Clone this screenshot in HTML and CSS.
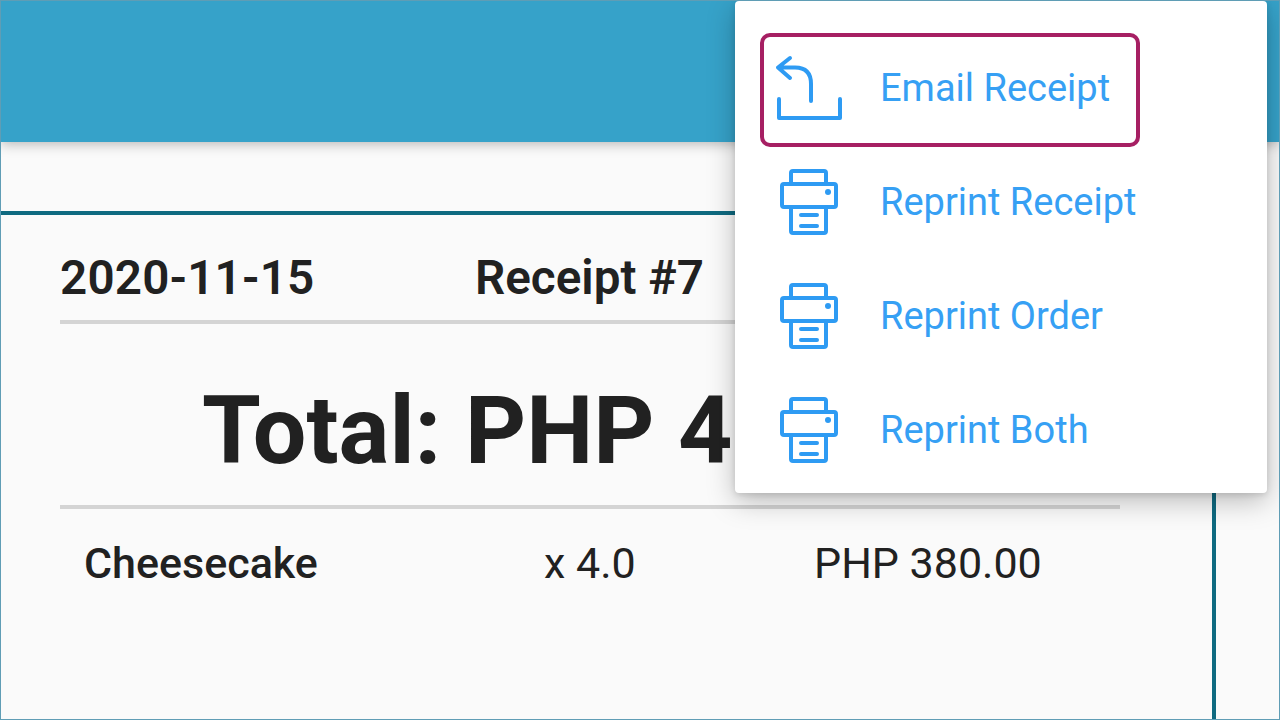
FILE: index.html
```html
<!DOCTYPE html>
<html lang="en">
<head>
<meta charset="utf-8">
<title>Receipt</title>
<link rel="stylesheet" href="styles.css">
</head>
<body>
<div class="screen">
  <header class="appbar"></header>
  <main class="content">
    <section class="card">
      <div class="meta">
        <span class="date">2020-11-15</span>
        <span class="receipt">Receipt #7</span>
      </div>
      <h1 class="total">Total: PHP 4</h1>
      <div class="line">
        <span class="name">Cheesecake</span>
        <span class="qty">x 4.0</span>
        <span class="price">PHP 380.00</span>
      </div>
    </section>
  </main>
  <nav class="menu">
    <div class="item focused">
      <svg class="icon" viewBox="0 0 68 72" aria-hidden="true"><path d="M15 4 L3 13.500 L15 24 M3 13.500 H20 Q36 13.500 36 30 V47 M4 45 V64 H65 V45"/></svg>
      <span>Email Receipt</span>
    </div>
    <div class="item">
      <svg class="icon" viewBox="0 0 68 72" aria-hidden="true"><path d="M16 16 V5 Q16 3 18 3 H49 Q51 3 51 5 V16 M9 16 H59 Q61 16 61 18 V37 Q61 39 59 39 H9 Q7 39 7 37 V18 Q7 16 9 16 Z M16 39 V63 Q16 65 18 65 H49 Q51 65 51 63 V39 M26 47 H42 M26 58 H42"/><circle class="dot" cx="53" cy="24" r="3"/></svg>
      <span>Reprint Receipt</span>
    </div>
    <div class="item">
      <svg class="icon" viewBox="0 0 68 72" aria-hidden="true"><path d="M16 16 V5 Q16 3 18 3 H49 Q51 3 51 5 V16 M9 16 H59 Q61 16 61 18 V37 Q61 39 59 39 H9 Q7 39 7 37 V18 Q7 16 9 16 Z M16 39 V63 Q16 65 18 65 H49 Q51 65 51 63 V39 M26 47 H42 M26 58 H42"/><circle class="dot" cx="53" cy="24" r="3"/></svg>
      <span>Reprint Order</span>
    </div>
    <div class="item">
      <svg class="icon" viewBox="0 0 68 72" aria-hidden="true"><path d="M16 16 V5 Q16 3 18 3 H49 Q51 3 51 5 V16 M9 16 H59 Q61 16 61 18 V37 Q61 39 59 39 H9 Q7 39 7 37 V18 Q7 16 9 16 Z M16 39 V63 Q16 65 18 65 H49 Q51 65 51 63 V39 M26 47 H42 M26 58 H42"/><circle class="dot" cx="53" cy="24" r="3"/></svg>
      <span>Reprint Both</span>
    </div>
  </nav>
</div>
</body>
</html>
```
FILE: styles.css
```css
* { box-sizing: border-box; }
html, body { margin: 0; padding: 0; }
body { width: 1280px; height: 720px; overflow: hidden; font-family: Roboto, "Liberation Sans", sans-serif; color: #212121; }
.screen { position: relative; width: 1280px; height: 720px; border: 1px solid #5f9db5; background: #fafafa; overflow: hidden; display: flex; flex-direction: column; }
.appbar { flex: 0 0 141px; background: #36a2c9; box-shadow: 0 2px 12px rgba(0,0,0,.28); position: relative; }
.content { flex: 1; padding-top: 69px; }
.card { width: 1216px; height: 520px; margin-left: -1px; border-top: 4px solid #0f6a80; border-right: 4px solid #0f6a80; padding: 0 92px 0 60px; display: flex; flex-direction: column; }
.meta { display: flex; height: 109px; align-items: center; border-bottom: 4px solid #d4d4d4; font-size: 47.600px; font-weight: 600; padding-top: 21px; }
.date { width: 415px; letter-spacing: .2px; }
.total { margin: 0; height: 185px; border-bottom: 4px solid #d4d4d4; padding: 52px 0 0 142px; font-size: 95px; line-height: 110px; font-weight: 700; }
.line { display: flex; height: 110px; align-items: center; font-size: 43px; padding: 0 0 2px 24px; }
.name { width: 460px; font-weight: 500; }
.qty { width: 270px; font-weight: 400; }
.price { font-weight: 400; }
.menu { position: absolute; left: 734px; top: 0; width: 532px; height: 492px; padding: 32px 0 4px 25px; background: #fff; border-radius: 4px; box-shadow: 0 8px 28px rgba(0,0,0,.26), 0 2px 6px rgba(0,0,0,.12); display: flex; flex-direction: column; }
.item { width: 380px; height: 114px; flex: none; padding-left: 15px; display: flex; align-items: center; gap: 37px; font-size: 38px; color: #36a0f4; border-radius: 10px; }
.item span { padding-bottom: 2px; line-height: 1.2; }
.focused { outline: 4px solid #a61f63; outline-offset: -4px; }
.icon { width: 68px; height: 72px; flex: none; fill: none; stroke: #2e9bf3; stroke-width: 4; stroke-linecap: round; stroke-linejoin: round; }
.icon .dot { fill: #2e9bf3; stroke: none; }
```
